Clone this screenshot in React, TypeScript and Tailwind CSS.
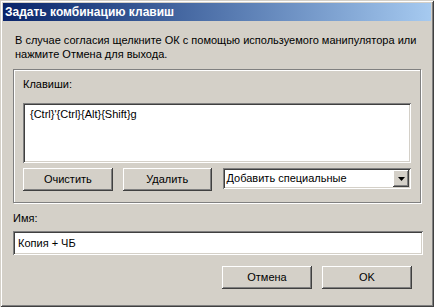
import React from 'react';

const font = { fontFamily: '"Liberation Sans", Arial, sans-serif' };

const raised =
  'bg-[#d4d0c8] shadow-[inset_-1px_-1px_0_#404040,inset_1px_1px_0_#ffffff,inset_-2px_-2px_0_#808080]';
const sunken =
  'bg-white shadow-[inset_1px_1px_0_#808080,inset_-1px_-1px_0_#ffffff,inset_2px_2px_0_#404040,inset_-2px_-2px_0_#d4d0c8]';

function Btn({ label, className = '' }: { label: string; className?: string }) {
  return (
    <div className={`${raised} h-[23px] flex items-center justify-center text-[11px] text-black ${className}`}>
      {label}
    </div>
  );
}

export default function App() {
  return (
    <div
      style={font}
      className="w-[434px] h-[307px] bg-[#d4d0c8] p-[3px] shadow-[inset_1px_1px_0_#d4d0c8,inset_-1px_-1px_0_#404040,inset_2px_2px_0_#ffffff,inset_-2px_-2px_0_#808080] flex flex-col overflow-hidden"
    >
      {/* title bar */}
      <div className="h-[18px] bg-gradient-to-r from-[#0a246a] to-[#a6caf0] flex items-center pl-[2px]">
        <span className="text-white font-bold text-[12px] leading-none">Задать комбинацию клавиш</span>
      </div>

      <div className="flex-1 px-[10px] pt-[12px] text-[11px] text-black">
        <p className="pl-[2px] leading-[14px]">
          В случае согласия щелкните ОК с помощью используемого манипулятора или
          <br />
          нажмите Отмена для выхода.
        </p>

        {/* group */}
        <div className="mt-[8px] h-[134px] border border-[#808080] shadow-[1px_1px_0_#ffffff,inset_1px_1px_0_#ffffff] px-[9px] pt-[7px]">
          <div className="leading-[14px]">Клавиши:</div>
          <div className={`${sunken} mt-[12px] h-[60px] px-[7px] pt-[4px] leading-[14px]`}>
            {"{Ctrl}'{Ctrl}{Alt}{Shift}g"}
          </div>
          <div className="mt-[5px] flex items-start">
            <Btn label="Очистить" className="w-[90px]" />
            <Btn label="Удалить" className="w-[89px] ml-[10px]" />
            <div className={`${sunken} ml-[11px] w-[189px] h-[21px] flex items-center pl-[4px] pr-[2px]`}>
              <span className="flex-1">Добавить специальные</span>
              <div className={`${raised} w-[16px] h-[17px] flex items-center justify-center`}>
                <svg width="7" height="4" viewBox="0 0 7 4">
                  <path d="M0 0h7L3.5 4z" fill="#000" />
                </svg>
              </div>
            </div>
          </div>
        </div>

        <div className="mt-[8px] leading-[14px]">Имя:</div>
        <div className={`${sunken} mt-[6px] h-[24px] flex items-center pl-[5px] w-[410px]`}>Копия + ЧБ</div>

        <div className="mt-[11px] flex justify-end pr-[9px]">
          <Btn label="Отмена" className="w-[90px]" />
          <Btn label="OK" className="w-[90px] ml-[10px]" />
        </div>
      </div>
    </div>
  );
}
